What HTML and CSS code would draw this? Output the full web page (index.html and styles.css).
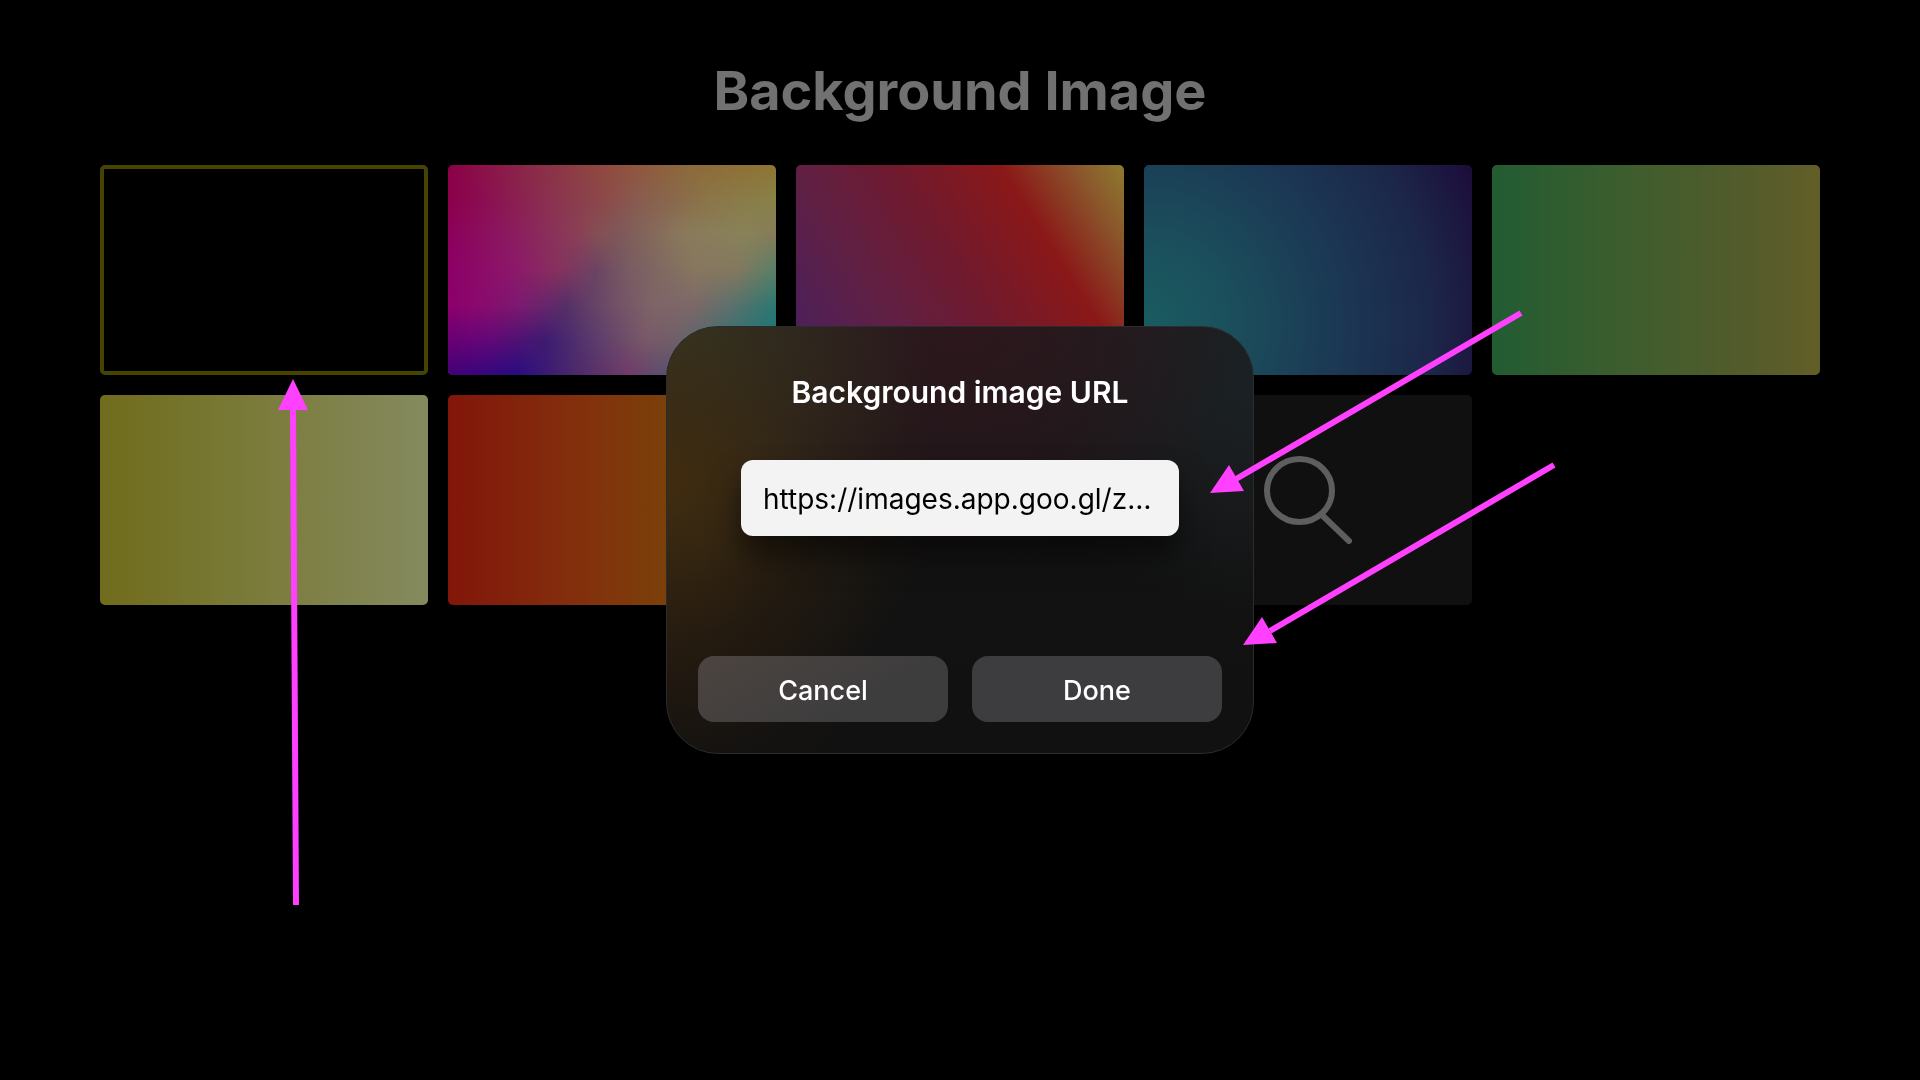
FILE: index.html
```html
<!DOCTYPE html>
<html lang="en">
<head>
  <meta charset="utf-8">
  <title>Background Image</title>
  <link rel="stylesheet" href="styles.css">
</head>
<body>
  <main class="page">
    <h1 class="page-title">Background Image</h1>
    <div class="tiles">
      <button class="tile tile-selected" type="button" aria-label="None"></button>
      <button class="tile tile-mesh" type="button" aria-label="Rainbow">
        <span class="mesh mesh-1"></span>
        <span class="mesh mesh-2"></span>
        <span class="mesh mesh-3"></span>
        <span class="mesh mesh-4"></span>
        <span class="mesh mesh-5"></span>
        <span class="mesh mesh-6"></span>
        <span class="mesh mesh-7"></span>
      </button>
      <button class="tile tile-sunset" type="button" aria-label="Sunset"></button>
      <button class="tile tile-ocean" type="button" aria-label="Ocean"></button>
      <button class="tile tile-meadow" type="button" aria-label="Meadow"></button>
      <button class="tile tile-lemon" type="button" aria-label="Lemon"></button>
      <button class="tile tile-ember" type="button" aria-label="Ember"></button>
      <button class="tile tile-plain" type="button" aria-label="Image URL"></button>
      <button class="tile tile-plain" type="button" aria-label="Search">
        <svg class="search-icon" viewBox="0 0 88 88" aria-hidden="true">
          <ellipse cx="35.5" cy="34.5" rx="32.5" ry="31.5"/>
          <path d="M59 60 85 85"/>
        </svg>
      </button>
    </div>
  </main>

  <div class="overlay">
    <form class="dialog" role="dialog" aria-labelledby="dialog-title">
      <h2 class="dialog-title" id="dialog-title"><label for="url">Background image URL</label></h2>
      <input class="field" id="url" type="text" value="https://images.app.goo.gl/z…">
      <div class="actions">
        <button class="action" type="button">Cancel</button>
        <button class="action" type="button">Done</button>
      </div>
    </form>
  </div>

  <svg class="arrows" viewBox="0 0 1920 1080" aria-hidden="true">
    <path class="shaft" d="M1521 313 1236 479M1554 465 1270 631M296 905 293 405"/>
    <path class="head" d="M1210 493 1229 465 1244 491ZM1243 645 1262 617 1277 643ZM293 379 278 410H308Z"/>
  </svg>
</body>
</html>
```

FILE: styles.css
```css
* {
  box-sizing: border-box;
}

body {
  margin: 0;
  min-height: 100vh;
  background: #000;
  color: #fff;
  font-family: Inter, "Liberation Sans", sans-serif;
}

.page {
  padding: 61px 100px;
}

.page-title {
  margin: 0 0 44px;
  color: #717171;
  font-size: 54px;
  font-weight: 700;
  line-height: 60px;
  text-align: center;
}

.tiles {
  display: grid;
  grid-template-columns: repeat(5, 1fr);
  gap: 20px;
}

.tile {
  display: grid;
  place-items: center;
  aspect-ratio: 328 / 210;
  padding: 0;
  border: 0;
  border-radius: 5px;
  overflow: hidden;
  background: #000;
}

.tile-selected {
  border: 4px solid #464400;
}

.tile-sunset {
  background: linear-gradient(58deg, #462060 0%, #602044 28%, #701a2e 50%, #8a1818 73%, #8a562b 89%, #8e7a30 100%);
}

.tile-ocean {
  background: radial-gradient(circle at 0 76%, #195c60 0, #1b4e5c 90px, #1b3854 195px, #1c2648 290px, #1c0c3a 365px);
}

.tile-meadow {
  background: linear-gradient(to right, #225c32, #405d2d 45%, #525b2b 75%, #625e28);
}

.tile-lemon {
  background: linear-gradient(to right, #706c1c, #7b7c3c 50%, #858a5e);
}

.tile-ember {
  background: linear-gradient(to right, #82160a, #83260c 25%, #82330c 45%, #7a400a 67%, #6c4a08);
}

.tile-plain {
  background: #101010;
}

/* Each strip fades in over the one before it, which blends the rows together. */
.mesh {
  grid-area: 1 / 1;
  width: 100%;
  height: 100%;
}

.mesh-1 {
  background: linear-gradient(to right, #8c0048, #8a2a48 25%, #904c40 49%, #8c6a3c 73%, #8f7532);
}

.mesh-2 {
  background: linear-gradient(to right, #8c004c, #8b1052 12%, #8a3050 30%, #8c4a4a 48%, #885c50 58%, #8b7648 80%, #88824a);
  mask-image: linear-gradient(transparent, #000 17%);
}

.mesh-3 {
  background: linear-gradient(to right, #8c005c, #8b1c60 20%, #8a4056 40%, #845054 46%, #7e585a 52%, #8a7a5c 72%, #88825a 90%, #867c58);
  mask-image: linear-gradient(transparent 17%, #000 33%);
}

.mesh-4 {
  background: linear-gradient(to right, #8c0066, #8c186a 20%, #88305e 33%, #6c4464 45%, #785c62 55%, #887660 75%, #84785f 88%, #588068);
  mask-image: linear-gradient(transparent 33%, #000 50%);
}

.mesh-5 {
  background: linear-gradient(to right, #8c006c, #8a0a6e 10%, #7c1a70 22%, #543068 36%, #704e66 50%, #7e6468 62%, #7c6868 75%, #60706c 85%, #2c7870);
  mask-image: linear-gradient(transparent 50%, #000 67%);
}

.mesh-6 {
  background: linear-gradient(to right, #6a0074, #640878 12%, #3e1c70 30%, #5c3c6c 45%, #7a5868 60%, #706068 70%, #486c70 82%, #1a7678);
  mask-image: linear-gradient(transparent 67%, #000 83%);
}

.mesh-7 {
  background: linear-gradient(to right, #440078, #280c80 21%, #4a286c 38%, #703c68 55%, #545470 69%, #2a6a78);
  mask-image: linear-gradient(transparent 83%, #000);
}

.search-icon {
  width: 88px;
  height: 88px;
  fill: none;
  stroke: #5e5e5e;
  stroke-width: 6;
  stroke-linecap: round;
}

.overlay {
  position: fixed;
  inset: 0;
  display: flex;
  align-items: center;
  justify-content: center;
}

.dialog {
  display: flex;
  flex-direction: column;
  align-items: center;
  width: 588px;
  padding: 45px 31px 31px;
  border: 1px solid #2c2c2c;
  border-radius: 52px;
  background:
    radial-gradient(circle at 0 36%, #402c10 0, #402c10b0 70px, #402c1040 160px, #402c1000 270px),
    radial-gradient(circle at 0 0, #333524 0, #333524a0 90px, #33352400 260px),
    radial-gradient(ellipse 280px 240px at 50% 0, #2f161cd0, #2d161c80 50%, #2d161c00),
    radial-gradient(circle at 100% 12%, #1a2124 0, #1a212480 100px, #1a212400 240px),
    radial-gradient(circle at 0 68%, #26190ea0 0, #24180e60 90px, #24180e00 220px),
    linear-gradient(#201c1e, #121212 60%, #111);
}

.dialog-title {
  margin: 0 0 48px;
  font-size: 30px;
  font-weight: 600;
  line-height: 40px;
}

.field {
  width: 438px;
  height: 76px;
  padding: 2px 22px 0;
  border: 0;
  border-radius: 12px;
  background: #f3f3f3;
  box-shadow: 0 20px 30px #0008;
  color: #000;
  font: 400 28px Inter, "Liberation Sans", sans-serif;
}

.actions {
  display: grid;
  grid-template-columns: 1fr 1fr;
  gap: 24px;
  width: 100%;
  margin-top: 120px;
}

.action {
  height: 66px;
  padding: 2px 0 0;
  border: 0;
  border-radius: 16px;
  background: #3d3d3f;
  color: #fff;
  font: 500 27px Inter, "Liberation Sans", sans-serif;
}

.action:first-child {
  background: linear-gradient(150deg, #4c443f, #3e3d3e 65%);
}

.arrows {
  position: absolute;
  top: 0;
  left: 0;
  width: 100%;
  pointer-events: none;
}

.shaft {
  fill: none;
  stroke: #ff40ff;
  stroke-width: 6;
}

.head {
  fill: #ff40ff;
}
```
